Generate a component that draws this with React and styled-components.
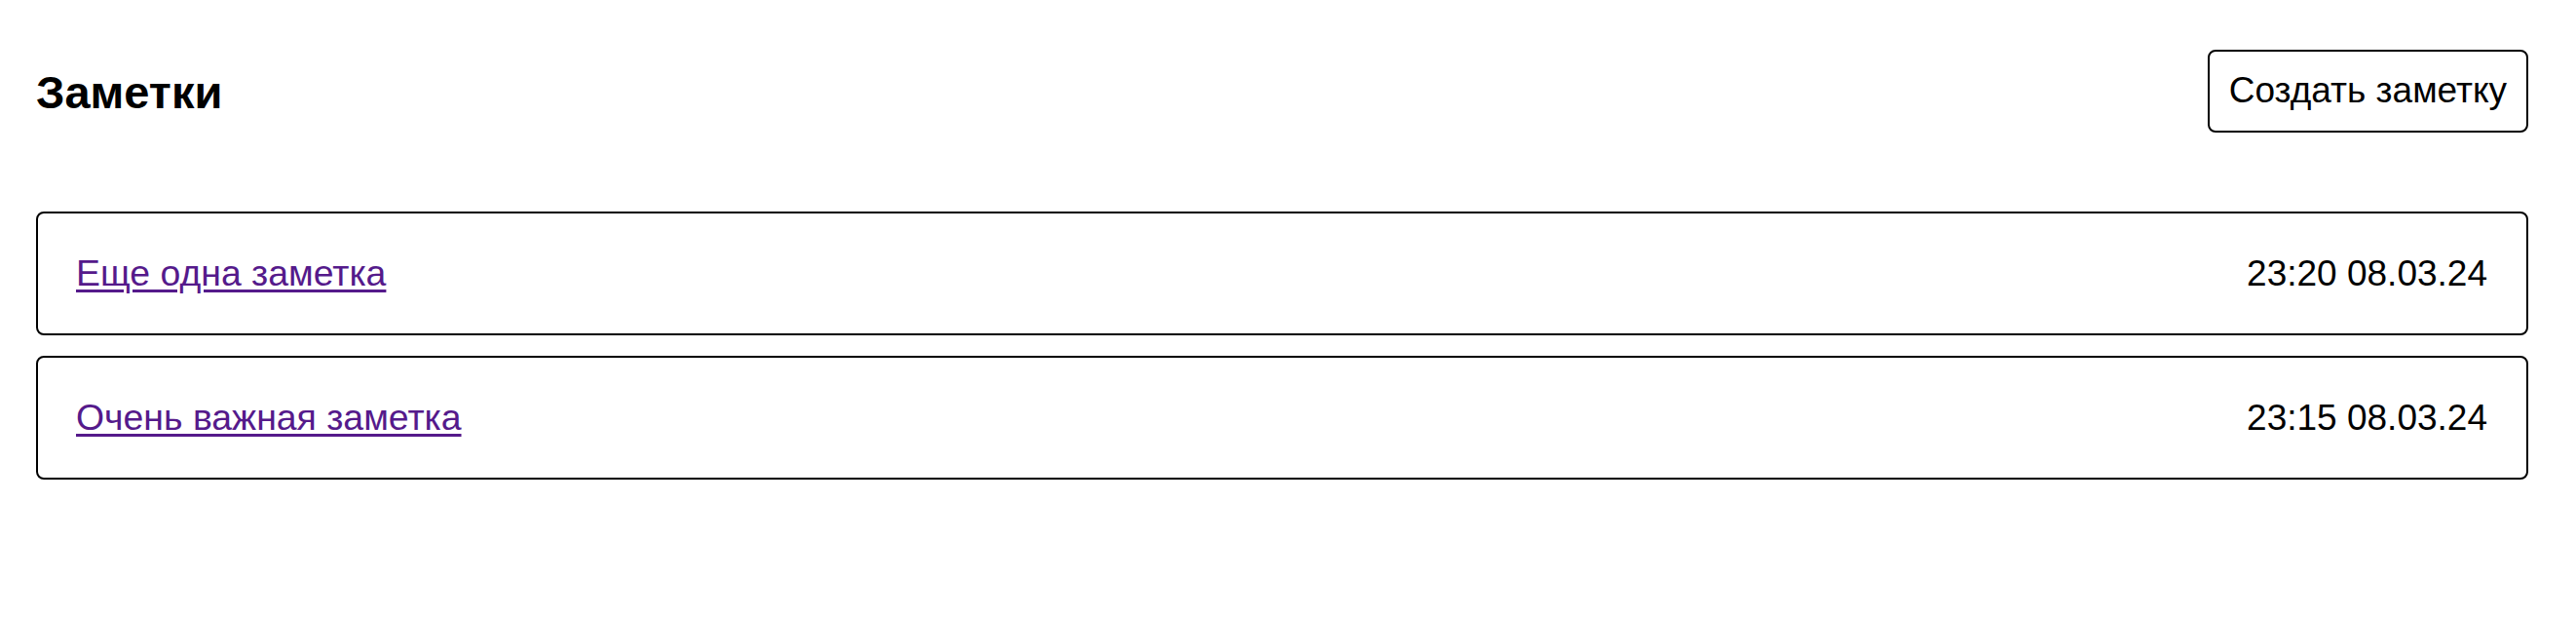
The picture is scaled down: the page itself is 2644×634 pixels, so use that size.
import React from "react";
import styled, { createGlobalStyle } from "styled-components";

const GlobalStyle = createGlobalStyle`
  html, body {
    margin: 0;
    padding: 0;
    background: #ffffff;
  }
  body {
    font-family: "Liberation Sans", Arial, sans-serif;
    font-size: 37px;
    color: #000000;
  }
`;

const Page = styled.main`
  padding: 51px 49px 0 37px;
`;

const Header = styled.header`
  display: flex;
  align-items: center;
  justify-content: space-between;
  margin-bottom: 81px;
`;

const Title = styled.h1`
  margin: 0;
  font-size: 47px;
  font-weight: 700;
  line-height: 1;
  padding-top: 2px;
`;

const CreateButton = styled.button`
  font-family: "Liberation Sans", Arial, sans-serif;
  font-size: 37px;
  color: #000000;
  background: #ffffff;
  border: 2px solid #000000;
  border-radius: 8px;
  padding: 19px 20px 20px;
  line-height: normal;
  cursor: pointer;
`;

const List = styled.ul`
  list-style: none;
  margin: 0;
  padding: 0;
  display: flex;
  flex-direction: column;
  gap: 21px;
`;

const Card = styled.li`
  display: flex;
  align-items: center;
  justify-content: space-between;
  border: 2px solid #000000;
  border-radius: 8px;
  padding: 40px 40px 40px 39px;
  line-height: normal;
`;

const NoteLink = styled.a`
  color: #551a8b;
  font-size: 37.4px;
  text-decoration: underline;
  text-underline-offset: 4px;
  text-decoration-thickness: 3px;
`;

const Time = styled.span`
  color: #000000;
`;

const notes = [
  { id: 1, title: "Еще одна заметка", date: "23:20 08.03.24" },
  { id: 2, title: "Очень важная заметка", date: "23:15 08.03.24" },
];

export default function App() {
  return (
    <>
      <GlobalStyle />
      <Page>
        <Header>
          <Title>Заметки</Title>
          <CreateButton type="button">Создать заметку</CreateButton>
        </Header>
        <List>
          {notes.map((n) => (
            <Card key={n.id}>
              <NoteLink href="#">{n.title}</NoteLink>
              <Time>{n.date}</Time>
            </Card>
          ))}
        </List>
      </Page>
    </>
  );
}
